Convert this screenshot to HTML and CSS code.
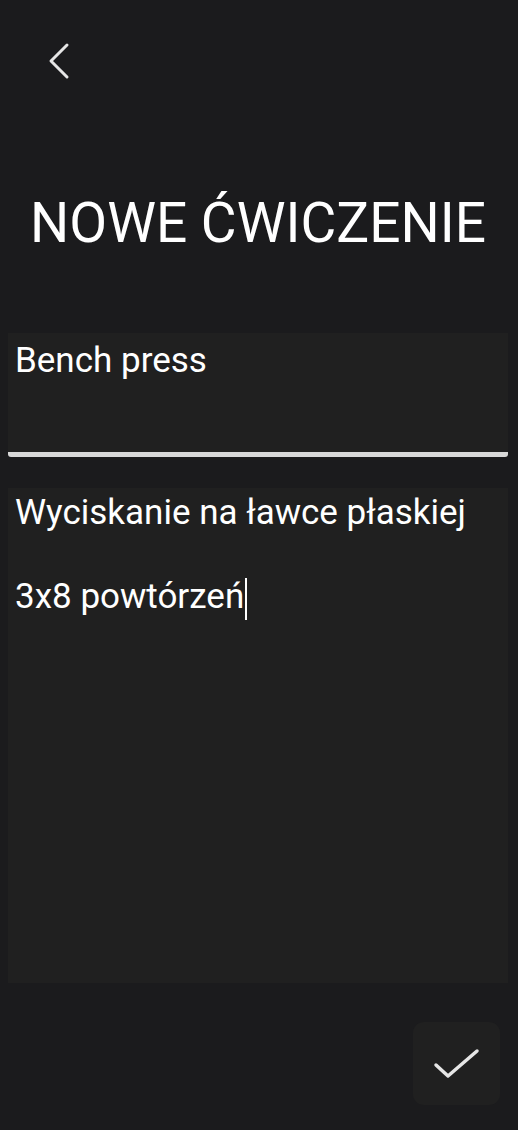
FILE: index.html
```html
<!DOCTYPE html>
<html lang="pl">
<head>
<meta charset="utf-8">
<link rel="stylesheet" href="styles.css">
</head>
<body>
<div class="screen">
  <header class="topbar">
    <button class="back" aria-label="Wstecz">
      <svg width="30" height="40" viewBox="0 0 30 40"><path d="M21 3 L5 19 L21 35" fill="none" stroke="#e6e6e6" stroke-width="3" stroke-linecap="round" stroke-linejoin="round"/></svg>
    </button>
  </header>
  <h1 class="title">NOWE ĆWICZENIE</h1>
  <div class="field name-field">Bench press</div>
  <div class="field desc-field">
    <div class="line">Wyciskanie na ławce płaskiej</div>
    <div class="line">&nbsp;</div>
    <div class="line">3x8 powtórzeń<span class="caret"></span></div>
  </div>
  <footer class="actions">
    <button class="confirm" aria-label="Zapisz">
      <svg width="50" height="34" viewBox="0 0 50 34"><path d="M4 18 L16 29 L45 4" fill="none" stroke="#e6e6e6" stroke-width="3.5" stroke-linecap="round" stroke-linejoin="round"/></svg>
    </button>
  </footer>
</div>
</body>
</html>
```
FILE: styles.css
```css
html, body {
  margin: 0;
  padding: 0;
  background: #1b1b1d;
}
body {
  font-family: Roboto, "Noto Sans", sans-serif;
  color: #ffffff;
}
.screen {
  width: 518px;
  height: 1130px;
  box-sizing: border-box;
  padding: 0 10px 0 8px;
  display: flex;
  flex-direction: column;
}
.topbar {
  height: 125px;
  display: flex;
  align-items: flex-start;
  padding-top: 42px;
  box-sizing: border-box;
}
.back {
  background: none;
  border: 0;
  padding: 0;
  margin-left: 38px;
  width: 30px;
  height: 40px;
  display: flex;
}
.title {
  margin: 0;
  font-weight: 400;
  font-size: 55px;
  line-height: 64px;
  text-align: center;
  height: 64px;
  padding-top: 66px;
  box-sizing: content-box;
}
.field {
  background: #202020;
  color: #ffffff;
  font-size: 35px;
  padding: 0 7px;
  box-sizing: border-box;
}
.name-field {
  margin-top: 78px;
  height: 124px;
  padding-top: 7px;
  line-height: 42px;
  border-bottom: 5px solid #d8d8d8;
  border-radius: 0 0 3px 3px;
}
.desc-field {
  margin-top: 31px;
  height: 495px;
  padding-top: 4px;
  line-height: 42px;
}
.line {
  white-space: pre;
}
.caret {
  display: inline-block;
  width: 1.5px;
  height: 42px;
  background: #ffffff;
  vertical-align: top;
  margin-top: 2px;
  margin-left: 1px;
}
.actions {
  margin-top: 39px;
  display: flex;
  justify-content: flex-end;
}
.confirm {
  width: 87px;
  height: 83px;
  background: #202020;
  border: 0;
  border-radius: 11px;
  display: flex;
  align-items: center;
  justify-content: center;
  padding: 0;
  margin-right: 8px;
}
```
